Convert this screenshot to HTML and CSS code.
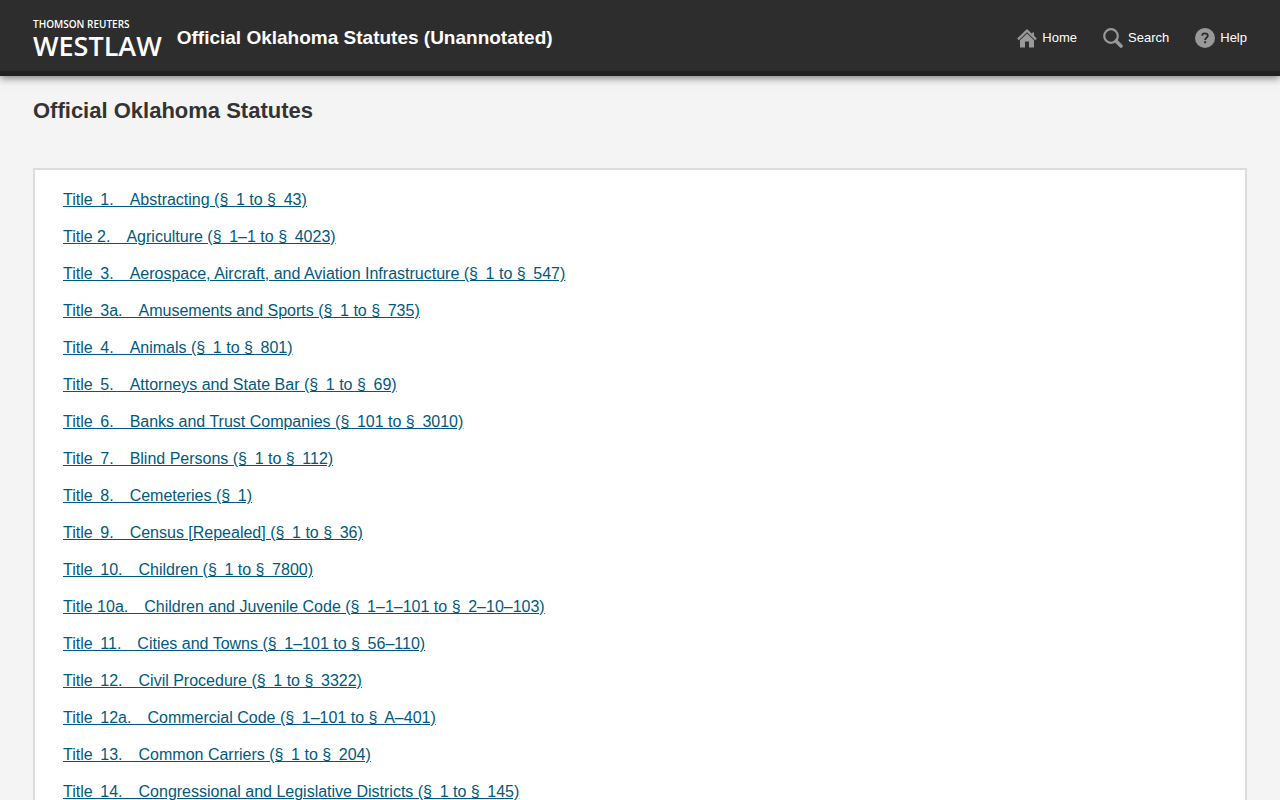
FILE: index.html
```html
<!DOCTYPE html>
<html lang="en">
<head>
  <meta charset="UTF-8" />
  <meta name="viewport" content="width=device-width, initial-scale=1.0"/>
  <title>Official Oklahoma Statutes (Unannotated)</title>
  <link rel="stylesheet" href="styles.css">
</head>
<body>

  <header class="header">
    <a class="logo" href="#">
      <span class="logo-company">THOMSON REUTERS</span>
      <span class="logo-product">WESTLAW</span>
    </a>
    <div class="site-title">Official Oklahoma Statutes (Unannotated)</div>
    <nav class="nav">
      <a href="#">
        <svg width="20" height="20" viewBox="0 0 20 20" fill="#999" aria-hidden="true">
          <path d="M10 1 L0.2 10.6 L1.8 12.2 L10 4.2 L18.2 12.2 L19.8 10.6 L17 7.8 V4.5 H15.2 V6.1 Z"/>
          <path d="M10 5.4 L3 12.2 V19.4 H8 V13.6 H12 V19.4 H17 V12.2 Z"/>
        </svg>
        Home
      </a>
      <a href="#">
        <svg width="20" height="20" viewBox="0 0 20 20" fill="none" stroke="#999" aria-hidden="true">
          <circle cx="8" cy="8" r="6.8" stroke-width="2.2"/>
          <path d="M13 13 L18 18" stroke-width="3.6" stroke-linecap="round"/>
        </svg>
        Search
      </a>
      <a href="#">
        <svg width="20" height="20" viewBox="0 0 20 20" fill="none" aria-hidden="true">
          <circle cx="10" cy="10" r="10" fill="#999"/>
          <path d="M7.2 7.8 C7.2 4.6 12.8 4.6 12.8 7.7 C12.8 9.6 10.1 9.8 10.1 12" stroke="#2d2d2d" stroke-width="1.9"/>
          <rect x="9.1" y="13.2" width="2" height="2" fill="#2d2d2d"/>
        </svg>
        Help
      </a>
    </nav>
  </header>

  <main class="main">
    <h1>Official Oklahoma Statutes</h1>
    <ul class="titles">
      <li><a href="#">Title&thinsp; 1.&emsp;Abstracting (§&thinsp; 1 to §&thinsp; 43)</a></li>
      <li><a href="#">Title 2.&emsp;Agriculture (§&thinsp; 1–1 to §&thinsp; 4023)</a></li>
      <li><a href="#">Title&thinsp; 3.&emsp;Aerospace, Aircraft, and Aviation Infrastructure (§&thinsp; 1 to §&thinsp; 547)</a></li>
      <li><a href="#">Title&thinsp; 3a.&emsp;Amusements and Sports (§&thinsp; 1 to §&thinsp; 735)</a></li>
      <li><a href="#">Title&thinsp; 4.&emsp;Animals (§&thinsp; 1 to §&thinsp; 801)</a></li>
      <li><a href="#">Title&thinsp; 5.&emsp;Attorneys and State Bar (§&thinsp; 1 to §&thinsp; 69)</a></li>
      <li><a href="#">Title&thinsp; 6.&emsp;Banks and Trust Companies (§&thinsp; 101 to §&thinsp; 3010)</a></li>
      <li><a href="#">Title&thinsp; 7.&emsp;Blind Persons (§&thinsp; 1 to §&thinsp; 112)</a></li>
      <li><a href="#">Title&thinsp; 8.&emsp;Cemeteries (§&thinsp; 1)</a></li>
      <li><a href="#">Title&thinsp; 9.&emsp;Census [Repealed] (§&thinsp; 1 to §&thinsp; 36)</a></li>
      <li><a href="#">Title&thinsp; 10.&emsp;Children (§&thinsp; 1 to §&thinsp; 7800)</a></li>
      <li><a href="#">Title 10a.&emsp;Children and Juvenile Code (§&thinsp; 1–1–101 to §&thinsp; 2–10–103)</a></li>
      <li><a href="#">Title&thinsp; 11.&emsp;Cities and Towns (§&thinsp; 1–101 to §&thinsp; 56–110)</a></li>
      <li><a href="#">Title&thinsp; 12.&emsp;Civil Procedure (§&thinsp; 1 to §&thinsp; 3322)</a></li>
      <li><a href="#">Title&thinsp; 12a.&emsp;Commercial Code (§&thinsp; 1–101 to §&thinsp; A–401)</a></li>
      <li><a href="#">Title&thinsp; 13.&emsp;Common Carriers (§&thinsp; 1 to §&thinsp; 204)</a></li>
      <li><a href="#">Title&thinsp; 14.&emsp;Congressional and Legislative Districts (§&thinsp; 1 to §&thinsp; 145)</a></li>
    </ul>
  </main>

</body>
</html>
```
FILE: styles.css
```css
body {
  font-family: "Liberation Sans", Arial, sans-serif;
  margin: 0;
  background: #f4f4f4;
  color: #333;
}
.header {
  display: flex;
  align-items: center;
  padding: 16px 33px 12px;
  background: #2d2d2d;
  border-bottom: 5px solid #222;
  box-shadow: 0 2px 8px rgba(0,0,0,0.5);
}
.header a {
  color: white;
  text-decoration: none;
}
.logo {
  font-family: "Open Sans", sans-serif;
  margin-right: 15px;
}
.logo span {
  display: block;
}
.logo-company {
  font-size: 10px;
  font-weight: 600;
  line-height: 16px;
}
.logo-product {
  font-size: 27px;
  font-weight: 600;
  line-height: 27px;
}
.site-title {
  color: white;
  font-size: 19px;
  font-weight: bold;
}
.nav {
  display: flex;
  gap: 26px;
  margin-left: auto;
}
.nav a {
  display: flex;
  align-items: center;
  gap: 5px;
  font-size: 13px;
}
.main {
  padding: 21px 33px;
}
h1 {
  font-size: 22px;
  line-height: 28px;
  margin: 0 0 43px;
}
.titles {
  list-style: none;
  margin: 0;
  padding: 20px 28px;
  background: white;
  border: 2px solid #ddd;
}
.titles li {
  font-size: 16px;
  line-height: 19px;
  margin-bottom: 18px;
}
.titles a {
  color: #005a80;
}
```
